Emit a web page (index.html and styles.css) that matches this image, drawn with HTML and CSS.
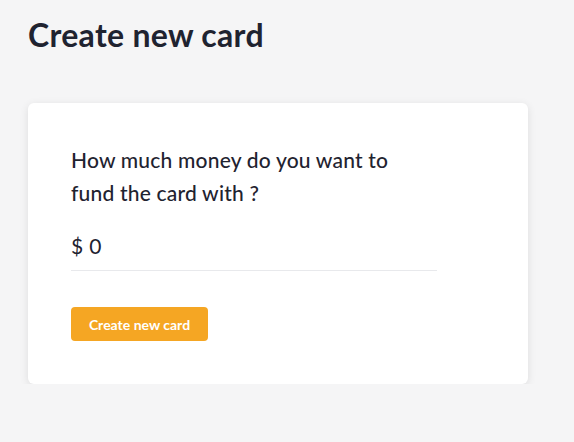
FILE: index.html
```html
<!DOCTYPE html>
<html>
<head>
<meta charset="utf-8">
<link rel="stylesheet" href="styles.css">
</head>
<body>
<main class="page">
  <h1 class="title">Create new card</h1>
  <section class="card">
    <div class="form">
      <p class="question">How much money do you want to fund the card with ?</p>
      <div class="amount"><span class="currency">$</span><span class="value">0</span></div>
      <button class="btn">Create new card</button>
    </div>
  </section>
</main>
</body>
</html>
```
FILE: styles.css
```css
html, body {
  margin: 0;
  padding: 0;
  background: #f5f5f6;
}
body {
  font-family: Lato, "Open Sans", sans-serif;
  color: #1f2330;
}
.page {
  padding: 16px 28px 0 28px;
  display: flex;
  flex-direction: column;
}
.title {
  margin: 0;
  font-size: 32px;
  font-weight: 700;
  line-height: 38px;
  letter-spacing: 0.3px;
  color: #1f2330;
}
.card {
  margin-top: 49px;
  width: 500px;
  height: 281px;
  box-sizing: border-box;
  background: #ffffff;
  border-radius: 6px;
  box-shadow: 0 2px 8px rgba(0, 0, 0, 0.1);
  padding: 40px 43px 0 43px;
}
.form {
  width: 366px;
  display: flex;
  flex-direction: column;
  align-items: flex-start;
}
.question {
  margin: 0;
  font-size: 21px;
  font-weight: 500;
  line-height: 33px;
  letter-spacing: 0.2px;
}
.amount {
  margin-top: 25px;
  width: 100%;
  font-size: 21px;
  line-height: 24px;
  padding-bottom: 12px;
  border-bottom: 1px solid #e8e9ec;
  display: flex;
  gap: 6px;
}
.btn {
  margin-top: 36px;
  width: 137px;
  height: 34px;
  border: none;
  border-radius: 4px;
  background: #f5a623;
  color: #ffffff;
  font-family: Lato, sans-serif;
  font-size: 14px;
  font-weight: 700;
  padding: 0;
}
```
